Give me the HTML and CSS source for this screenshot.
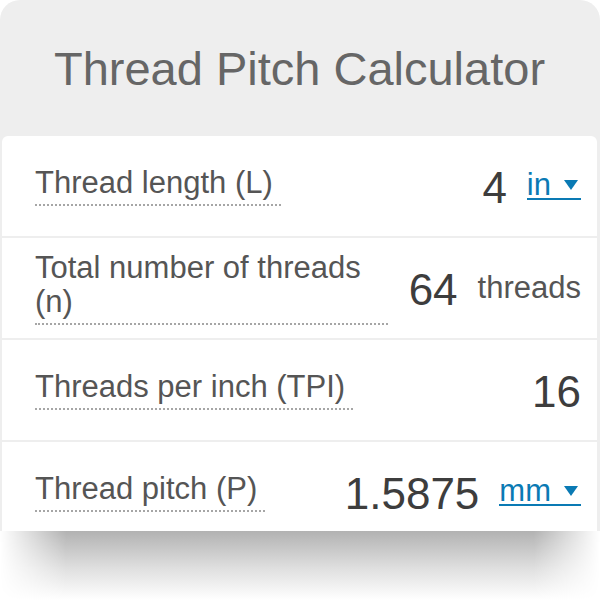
FILE: index.html
```html
<!DOCTYPE html>
<html lang="en">
<head>
    <meta charset="UTF-8">
    <meta name="viewport" content="width=device-width, initial-scale=1.0">
    <title>Thread Pitch Calculator</title>
    <link rel="stylesheet" href="styles.css">
</head>
<body>
    <div class="calc">
        <div class="calc-head">
            <h1>Thread Pitch Calculator</h1>
        </div>

        <div class="calc-rows">
            <div class="row">
                <span class="label">Thread length (L)</span>
                <div class="field">
                    <span class="value">4</span>
                    <a class="unit-select" href="#">in<span class="caret"></span></a>
                </div>
            </div>

            <div class="row">
                <span class="label">Total number of threads (n)</span>
                <div class="field">
                    <span class="value">64</span>
                    <span class="unit">threads</span>
                </div>
            </div>

            <div class="row">
                <span class="label">Threads per inch (TPI)</span>
                <div class="field">
                    <span class="value">16</span>
                </div>
            </div>

            <div class="row">
                <span class="label">Thread pitch (P)</span>
                <div class="field">
                    <span class="value">1.5875</span>
                    <a class="unit-select" href="#">mm<span class="caret"></span></a>
                </div>
            </div>
        </div>
    </div>

    <div class="calc-shadow"></div>
</body>
</html>
```

FILE: styles.css
```css
body{
    margin: 0;
    background-color: #ffffff;
    font-family: "Liberation Sans", Arial, sans-serif;
}

.calc{
    height: 531px;
    overflow: hidden;
    background-color: #eeeeee;
    border-radius: 20px 20px 0 0;
    padding: 0 3px 0 2px;
}

.calc-head{
    height: 136px;
    display: flex;
    align-items: center;
    justify-content: center;
}

.calc-head h1{
    margin: 0;
    font-size: 47px;
    font-weight: normal;
    color: #666666;
}

.calc-rows{
    display: flex;
    flex-direction: column;
    gap: 2px;
    border-radius: 6px 6px 0 0;
    overflow: hidden;
}

.row{
    height: 100px;
    flex-shrink: 0;
    display: flex;
    align-items: center;
    column-gap: 21px;
    padding: 0 16px 0 33px;
    background-color: #ffffff;
}

.label{
    font-size: 31px;
    line-height: 34px;
    color: #555555;
    padding: 0 8px 4px 0;
    border-bottom: 2px dotted #a6a6a6;
}

.field{
    margin-left: auto;
    display: flex;
    align-items: center;
    gap: 20px;
    flex-shrink: 0;
}

.value{
    font-size: 44px;
    color: #3d3d3d;
    padding-top: 4px;
}

.unit{
    font-size: 31px;
    color: #555555;
}

/* unit dropdown: text + small triangle, one underline under both */
.unit-select{
    display: inline-flex;
    align-items: center;
    gap: 13px;
    font-size: 31px;
    line-height: 27px;
    color: #0a7ab4;
    text-decoration: none;
    padding-right: 3px;
    margin-bottom: 2px;
    border-bottom: 2px solid #0a7ab4;
}

.caret{
    width: 0;
    height: 0;
    margin-top: 2px;
    border-left: 7px solid transparent;
    border-right: 7px solid transparent;
    border-top: 10px solid #0a7ab4;
}

.calc-shadow{
    height: 69px;
    background: linear-gradient(#b2b2b2, #e0e0e0 55%, #ffffff);
    -webkit-mask-image: linear-gradient(to right, transparent, #000 11%, #000 89%, transparent);
    mask-image: linear-gradient(to right, transparent, #000 11%, #000 89%, transparent);
}
```
